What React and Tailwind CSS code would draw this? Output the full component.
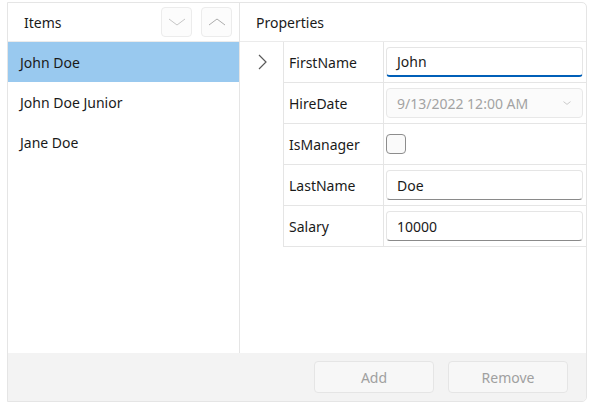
import { useState } from 'react';

const font = { fontFamily: '"Segoe UI", "Noto Sans", "Liberation Sans", sans-serif' };

function Chevron({ dir = 'down', className = '', width = 1 }) {
  const d = {
    down: 'M2 7 L10 13 L18 7',
    up: 'M2 13 L10 7 L18 13',
    right: 'M7 3 L14 10 L7 17',
    small: 'M5 8 L10 12 L15 8',
  }[dir];
  return (
    <svg viewBox="0 0 20 20" className={className} fill="none" stroke="currentColor" strokeWidth={width}>
      <path d={d} />
    </svg>
  );
}

const people = ['John Doe', 'John Doe Junior', 'Jane Doe'];

function TextBox({ value, focused }) {
  return (
    <div
      className={`h-[30px] ml-[2px] mr-[3px] flex items-center px-[10px] rounded-[4px] border border-[#e5e5e5] bg-white ${
        focused ? 'border-b-2 border-b-[#005fb8]' : 'border-b-[#8a8a8a]'
      }`}
    >
      <span className="text-[14px] text-[#1a1a1a]">{value}</span>
    </div>
  );
}

export default function App() {
  const [selected, setSelected] = useState(0);

  const rows = [
    { name: 'FirstName', cell: <TextBox value="John" focused /> },
    {
      name: 'HireDate',
      cell: (
        <div className="h-[30px] ml-[2px] mr-[3px] flex items-center justify-between pl-[10px] pr-[8px] rounded-[4px] border border-[#e8e8e8] bg-[#fbfbfb]">
          <span className="text-[14px] text-[#a3a3a3]">9/13/2022 12:00 AM</span>
          <Chevron dir="small" className="w-[14px] h-[14px] text-[#b5b5b5]" />
        </div>
      ),
    },
    {
      name: 'IsManager',
      cell: <div className="ml-[2px] w-[20px] h-[20px] rounded-[4px] border border-[#8d8d8d] bg-[#fafafa]" />,
    },
    { name: 'LastName', cell: <TextBox value="Doe" /> },
    { name: 'Salary', cell: <TextBox value="10000" /> },
  ];

  return (
    <div className="w-[594px] h-[408px] bg-white pt-[2px] pl-[7px]" style={font}>
      <div className="w-[580px] h-[400px] flex flex-col border border-[#e5e5e5] rounded-r-[5px] overflow-hidden text-[#1a1a1a]">
        <div className="flex-1 flex min-h-0">
          {/* Items */}
          <div className="w-[232px] flex flex-col border-r border-[#e5e5e5]">
            <div className="h-[39px] shrink-0 flex items-center justify-between pl-[16px] pr-[7px] border-b border-[#ebebeb]">
              <span className="text-[14px]">Items</span>
              <div className="flex gap-[9px]">
                <button className="w-[31px] h-[30px] rounded-[4px] border border-[#ececec] bg-[#fcfcfc] flex items-center justify-center">
                  <Chevron dir="down" className="w-[20px] h-[20px] text-[#c6c6c6]" />
                </button>
                <button className="w-[31px] h-[30px] rounded-[4px] border border-[#ececec] bg-[#fcfcfc] flex items-center justify-center">
                  <Chevron dir="up" className="w-[20px] h-[20px] text-[#acacac]" />
                </button>
              </div>
            </div>
            <div className="flex flex-col">
              {people.map((p, i) => (
                <div
                  key={p}
                  onClick={() => setSelected(i)}
                  className={`h-[40px] flex items-center pl-[12px] text-[14px] ${
                    selected === i ? 'bg-[#99c9ef]' : ''
                  }`}
                >
                  {p}
                </div>
              ))}
            </div>
          </div>

          {/* Properties */}
          <div className="flex-1 flex flex-col">
            <div className="h-[39px] shrink-0 flex items-center pl-[16px] border-b border-[#ebebeb]">
              <span className="text-[14px]">Properties</span>
            </div>
            <div className="flex">
              <div className="w-[43px] shrink-0 flex flex-col">
                <div className="h-[40px] flex items-center justify-center">
                  <Chevron dir="right" width={1.2} className="w-[20px] h-[20px] text-[#5a5a5a]" />
                </div>
              </div>
              <div className="flex-1 flex flex-col border-l border-[#e5e5e5]">
                {rows.map((r) => (
                  <div key={r.name} className="h-[41px] flex border-b border-[#e5e5e5]">
                    <div className="w-[100px] shrink-0 flex items-center pl-[5px] text-[14px] border-r border-[#e5e5e5]">
                      {r.name}
                    </div>
                    <div className="flex-1 flex items-center">
                      <div className="w-full">{r.cell}</div>
                    </div>
                  </div>
                ))}
              </div>
            </div>
          </div>
        </div>

        {/* Footer */}
        <div className="h-[48px] shrink-0 bg-[#f3f3f3] flex items-center justify-end gap-[14px] pr-[18px]">
          <button className="w-[120px] h-[32px] rounded-[4px] border border-[#e5e5e5] bg-[#f7f7f7] text-[14px] text-[#a0a0a0]">
            Add
          </button>
          <button className="w-[120px] h-[32px] rounded-[4px] border border-[#e5e5e5] bg-[#f7f7f7] text-[14px] text-[#a0a0a0]">
            Remove
          </button>
        </div>
      </div>
    </div>
  );
}
